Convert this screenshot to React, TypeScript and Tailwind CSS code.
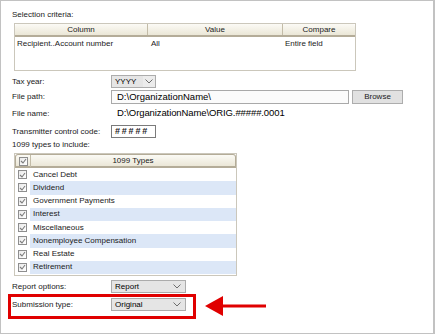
import React from "react"

const font = { fontFamily: '"Liberation Sans", Arial, sans-serif' }

function Chevron() {
  return (
    <svg width="8" height="5" viewBox="0 0 8 5" className="shrink-0">
      <path d="M0.5 0.5 L4 4 L7.5 0.5" fill="none" stroke="#6d6d6d" strokeWidth="1" />
    </svg>
  )
}

function Check() {
  return (
    <span className="flex h-[9px] w-[9px] items-center justify-center border border-[#8e8e8e] bg-gradient-to-br from-[#e9e9e9] to-white">
      <svg width="7" height="6" viewBox="0 0 7 6">
        <path d="M1 3 L3 5 L6 1" fill="none" stroke="#7c7c7c" strokeWidth="1.1" />
      </svg>
    </span>
  )
}

function Select({ value, width }: { value: string; width: string }) {
  return (
    <div
      className={`flex h-[13px] items-center justify-between border border-[#acacac] bg-[#e5e5e5] pl-[3px] pr-[4px] text-[8px] text-black ${width}`}
    >
      <span>{value}</span>
      <Chevron />
    </div>
  )
}

function Label({ children }: { children: React.ReactNode }) {
  return <span className="w-[99px] shrink-0 text-[8px] leading-[10px] text-[#1a1a1a]">{children}</span>
}

const types = [
  "Cancel Debt",
  "Dividend",
  "Government Payments",
  "Interest",
  "Miscellaneous",
  "Nonemployee Compensation",
  "Real Estate",
  "Retirement",
]

export default function App() {
  return (
    <div className="h-[335px] w-[435px] bg-white" style={font}>
      <div className="flex h-[334px] w-[435px] flex-col border border-r-2 border-[#c2c2c2] bg-white pl-[11px]">
        {/* Selection criteria */}
        <div className="mt-[9px] h-[10px] text-[8px] leading-[10px] text-[#1a1a1a]">Selection criteria:</div>
        <div className="ml-[2px] mt-[3px] h-[48px] w-[342px] border border-[#cbc7bb] bg-white">
          <div className="grid h-[13px] grid-cols-[133px_135px_1fr] rounded-t-[3px] border-b-2 border-[#b4ac98] bg-gradient-to-b from-[#fbfaf5] to-[#ebe7d7] text-[8px] leading-[11px] text-[#1a1a1a]">
            <span className="border-r border-[#c3bca8] text-center">Column</span>
            <span className="border-r border-[#c3bca8] text-center">Value</span>
            <span className="text-center">Compare</span>
          </div>
          <div className="grid h-[13px] grid-cols-[133px_135px_1fr] items-center text-[8px] text-[#1a1a1a]">
            <span className="pl-[2px]">Recipient..Account number</span>
            <span className="pl-[3px]">All</span>
            <span className="pl-[2px]">Entire field</span>
          </div>
        </div>

        {/* Tax year */}
        <div className="mt-[4px] flex h-[13px] items-center">
          <Label>Tax year:</Label>
          <div className="flex h-[13px] w-[45px] items-center justify-between border border-[#acacac] bg-[#e5e5e5] pl-[3px] text-[8px] text-black">
            <span>YYYY</span>
            <span className="flex h-[11px] w-[12px] items-center justify-center bg-[#ececec]">
              <Chevron />
            </span>
          </div>
        </div>

        {/* File path */}
        <div className="mt-[2px] flex h-[14px] items-center">
          <Label>File path:</Label>
          <div className="flex h-[14px] w-[238px] items-center border border-[#a9a9a9] bg-[#fbfbfb] pl-[5px] text-[9.5px] text-black">
            D:\OrganizationName\
          </div>
          <button className="ml-[3px] h-[14px] w-[51px] border border-[#adadad] bg-[#e1e1e1] text-[8px] text-[#1a1a1a]">
            Browse
          </button>
        </div>

        {/* File name */}
        <div className="mt-[3px] flex h-[13px] items-center">
          <Label>File name:</Label>
          <span className="pl-[6px] text-[9.5px] tracking-[-0.1px] text-black">D:\OrganizationName\ORIG.#####.0001</span>
        </div>

        {/* Transmitter control code */}
        <div className="mt-[5px] flex h-[13px] items-center">
          <Label>Transmitter control code:</Label>
          <div className="flex h-[13px] w-[45px] items-center border border-[#7b7b7b] bg-white pl-[3px] text-[9px] font-bold tracking-[1.8px] text-[#222]">
            #####
          </div>
        </div>

        {/* 1099 types */}
        <div className="mt-[2px] h-[10px] text-[8px] leading-[10px] text-[#1a1a1a]">1099 types to include:</div>
        <div className="ml-[2px] mt-[3px] w-[223px] border border-[#cbc7bb] bg-white pb-[1px]">
          <div className="grid h-[14px] grid-cols-[15px_1fr] rounded-t-[3px] border border-b-2 border-[#b4ac98] bg-gradient-to-b from-[#fbfaf5] to-[#ebe7d7] text-[8px] text-[#1a1a1a]">
            <span className="flex items-center justify-center border-r border-[#c3bca8]">
              <Check />
            </span>
            <span className="flex items-center justify-center">1099 Types</span>
          </div>
          {types.map((t, i) => (
            <div key={t} className="grid h-[13.25px] grid-cols-[15px_1fr] text-[8px] text-[#1a1a1a]">
              <span className="flex items-center justify-center">
                <Check />
              </span>
              <span className={`flex items-center pl-[3px] ${i % 2 === 1 ? "bg-[#dce7f7]" : "bg-white"}`}>{t}</span>
            </div>
          ))}
        </div>

        {/* Report options */}
        <div className="mt-[4px] flex h-[13px] items-center">
          <Label>Report options:</Label>
          <Select value="Report" width="w-[75px]" />
        </div>

        {/* Submission type */}
        <div className="flex items-center">
          <div className="-ml-[4px] mt-[1px] flex h-[25px] w-[188px] items-start border-[3px] border-[#e00000] pl-[1px] pt-[1px]">
            <div className="flex h-[13px] items-center">
              <Label>Submission type:</Label>
              <Select value="Original" width="w-[75px]" />
            </div>
          </div>
          <svg width="62" height="24" viewBox="0 0 62 24" className="ml-[9px]">
            <path d="M0 12 L18 2 L18 22 Z" fill="#e00000" />
            <rect x="16" y="10.5" width="45" height="3" fill="#e00000" />
          </svg>
        </div>
      </div>
    </div>
  )
}
